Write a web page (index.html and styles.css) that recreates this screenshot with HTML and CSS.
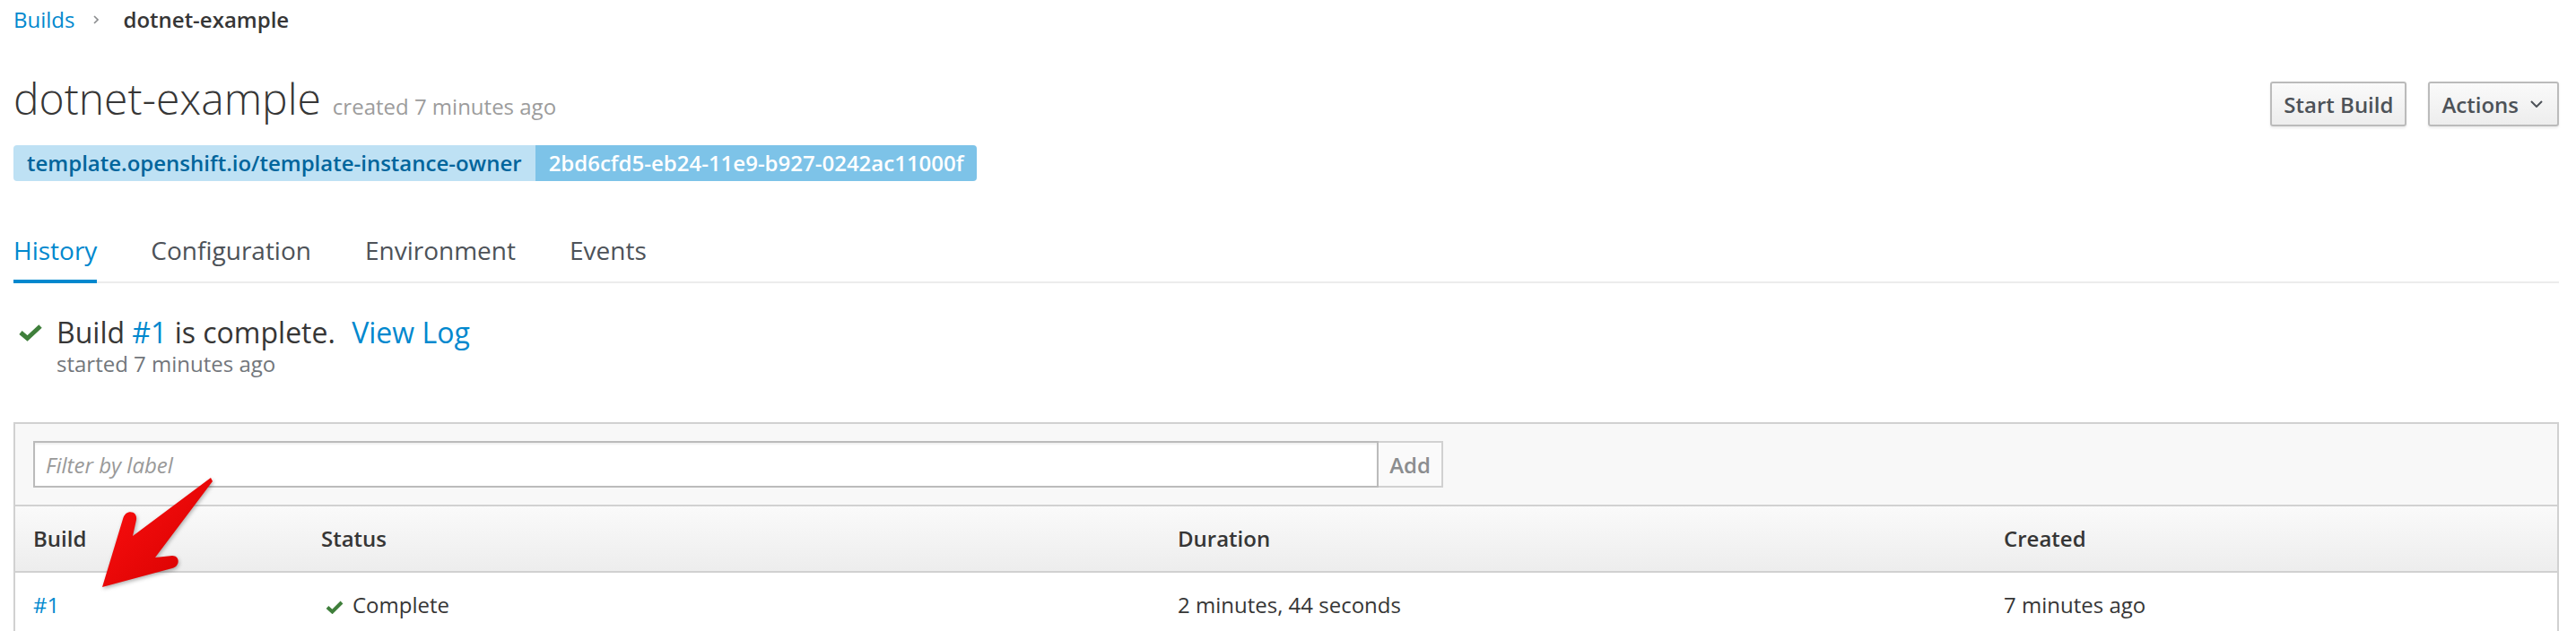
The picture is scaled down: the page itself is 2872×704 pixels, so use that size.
FILE: index.html
```html
<!DOCTYPE html>
<html lang="en">
<head>
<meta charset="utf-8">
<title>dotnet-example</title>
<link rel="stylesheet" href="styles.css">
</head>
<body>
<div class="page">
  <nav class="breadcrumb">
    <a href="#">Builds</a>
    <svg class="sep" width="6" height="10" viewBox="0 0 6 10"><path d="M1 1 L5 5 L1 9" fill="none" stroke="#8b8d8f" stroke-width="1.6"/></svg>
    <span class="current">dotnet-example</span>
  </nav>

  <div class="title-row">
    <h1>dotnet-example<small>created 7 minutes ago</small></h1>
    <div class="actions">
      <button class="btn">Start Build</button>
      <button class="btn">Actions<svg class="caret" width="14" height="8" viewBox="0 0 14 8"><path d="M1 1 L7 7 L13 1" fill="none" stroke="#4d5258" stroke-width="2"/></svg></button>
    </div>
  </div>

  <div class="labels">
    <span class="tag-key">template.openshift.io/template-instance-owner</span><span class="tag-val">2bd6cfd5-eb24-11e9-b927-0242ac11000f</span>
  </div>

  <ul class="tabs">
    <li><a class="active" href="#">History</a></li>
    <li><a href="#">Configuration</a></li>
    <li><a href="#">Environment</a></li>
    <li><a href="#">Events</a></li>
  </ul>

  <div class="status">
    <div class="status-icon">
      <svg width="28" height="20" viewBox="0 0 28 20"><path d="M3 10 L10.5 16.5 L25 3" fill="none" stroke="#3f7f3b" stroke-width="5"/></svg>
    </div>
    <div class="status-text">
      <div class="status-title">Build <a href="#">#1</a> is complete. <a class="log" href="#">View Log</a></div>
      <div class="status-sub">started 7 minutes ago</div>
    </div>
  </div>

  <div class="panel">
    <div class="toolbar">
      <div class="filter">
        <input type="text" placeholder="Filter by label">
        <button class="add">Add</button>
      </div>
    </div>
    <table>
      <colgroup>
        <col class="c1"><col class="c2"><col class="c3"><col>
      </colgroup>
      <thead>
        <tr><th>Build</th><th>Status</th><th>Duration</th><th>Created</th></tr>
      </thead>
      <tbody>
        <tr>
          <td><a href="#">#1</a></td>
          <td><svg class="ok" width="20" height="15" viewBox="0 0 20 15"><path d="M2 7.5 L7.5 12.5 L18 2" fill="none" stroke="#3f7f3b" stroke-width="4"/></svg>Complete</td>
          <td>2 minutes, 44 seconds</td>
          <td>7 minutes ago</td>
        </tr>
      </tbody>
    </table>
  </div>

  <svg class="arrow" width="150" height="150" viewBox="100 520 150 150">
    <defs>
      <linearGradient id="ag" x1="0" y1="0" x2="1" y2="1">
        <stop offset="0" stop-color="#ff1010"/>
        <stop offset="1" stop-color="#d40000"/>
      </linearGradient>
    </defs>
    <path d="M235 533 L148 598 L152 580 C154 570 140 567 137 579 L114 655 L192 634 C201 632 201 620 192 620 L173 622 L237 537 Z" fill="url(#ag)"/>
  </svg>
</div>
</body>
</html>
```

FILE: styles.css
```css
body {
  margin: 0;
  font-family: "Open Sans", "Liberation Sans", sans-serif;
  color: #363636;
  background: #fff;
  overflow: hidden;
}

a {
  color: #0088ce;
  text-decoration: none;
}

.page {
  position: relative;
  padding: 4px 19px 0 15px;
}

.breadcrumb {
  display: flex;
  align-items: center;
  font-size: 24px;
  line-height: 36px;
  height: 36px;
}

.breadcrumb .sep {
  margin: 0 27px 0 21px;
}

.breadcrumb .current {
  font-weight: 600;
}

.title-row {
  display: flex;
  justify-content: space-between;
  align-items: flex-start;
  margin-top: 43px;
}

h1 {
  margin: 0;
  font-size: 48px;
  font-weight: 300;
  line-height: 53px;
}

h1 small {
  font-size: 24px;
  font-weight: 400;
  line-height: 1;
  color: #9c9c9c;
  margin-left: 13px;
}

.actions {
  display: flex;
  gap: 24px;
  margin-top: 8px;
}

.btn {
  display: flex;
  align-items: center;
  height: 50px;
  padding: 0 13px;
  border: 2px solid #bbb;
  border-radius: 3px;
  background: linear-gradient(#fafafa, #ededed);
  box-shadow: 0 2px 3px rgba(3, 3, 3, 0.08);
  font-family: "Open Sans", "Liberation Sans", sans-serif;
  font-size: 24px;
  font-weight: 600;
  color: #4d5258;
}

.btn .caret {
  margin-left: 13px;
  margin-right: 3px;
}

.labels {
  display: flex;
  margin-top: 21px;
  font-size: 24px;
  font-weight: 600;
  line-height: 40px;
}

.tag-key {
  background: #bee1f4;
  color: #00659c;
  padding: 0 15px;
  border-radius: 4px 0 0 4px;
}

.tag-val {
  background: #7dc3e8;
  color: #fff;
  padding: 0 15px;
  border-radius: 0 4px 4px 0;
}

.tabs {
  list-style: none;
  margin: 57px 0 0;
  padding: 0;
  display: flex;
  border-bottom: 2px solid #ececec;
}

.tabs li {
  margin-right: 60px;
}

.tabs a {
  display: block;
  font-size: 28px;
  line-height: 40px;
  padding-bottom: 13px;
  border-bottom: 4px solid transparent;
  margin-bottom: -2px;
  color: #4d5258;
}

.tabs a.active {
  color: #0088ce;
  border-bottom-color: #0088ce;
}

.status {
  display: flex;
  margin-top: 37px;
}

.status-icon {
  width: 48px;
  flex: none;
}

.status-icon svg {
  display: block;
  margin: 8px 0 0 5px;
}

.status-title {
  font-size: 32px;
  line-height: 36px;
}

.status-title .log {
  margin-left: 10px;
}

.status-sub {
  font-size: 24px;
  line-height: 34px;
  color: #72767b;
}

.panel {
  margin-top: 48px;
  border: 2px solid #d1d1d1;
}

.toolbar {
  background: #f8f8f8;
  border-bottom: 2px solid #d1d1d1;
  padding: 19px 20px;
}

.filter {
  display: flex;
}

.filter input {
  width: 1500px;
  height: 52px;
  box-sizing: border-box;
  border: 2px solid #bbb;
  padding: 0 12px;
  margin: 0;
  background: #fff;
  box-shadow: inset 0 2px 2px rgba(3, 3, 3, 0.06);
  font-family: "Open Sans", "Liberation Sans", sans-serif;
  font-size: 24px;
  font-style: italic;
  color: #363636;
  outline: none;
}

.filter input::placeholder {
  color: #999;
  font-style: italic;
}

.add {
  width: 72px;
  height: 52px;
  margin: 0;
  border: 2px solid #d1d1d1;
  border-left: 0;
  background: #fafafa;
  font-family: "Open Sans", "Liberation Sans", sans-serif;
  font-size: 24px;
  font-weight: 600;
  color: #8b8d8f;
  padding: 0;
}

table {
  width: 100%;
  border-collapse: collapse;
  table-layout: fixed;
}

col.c1 { width: 321px; }
col.c2 { width: 955px; }
col.c3 { width: 921px; }

th {
  text-align: left;
  font-weight: 600;
  font-size: 24px;
  line-height: 34px;
  padding: 19px 20px;
  background: linear-gradient(#fafafa, #ededed);
  border-bottom: 2px solid #d1d1d1;
}

td {
  font-size: 24px;
  line-height: 34px;
  padding: 19px 20px;
}

td .ok {
  margin: 0 10px 0 5px;
  vertical-align: -1px;
}

.arrow {
  position: absolute;
  left: 100px;
  top: 520px;
  filter: drop-shadow(1px 2px 2px rgba(0, 0, 0, 0.3));
}
```
